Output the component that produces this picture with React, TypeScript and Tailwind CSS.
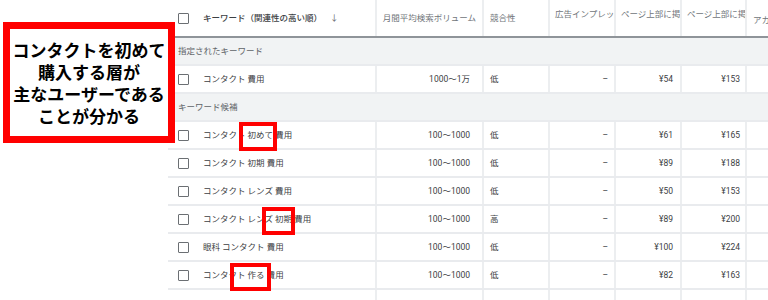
type Row = {
  keyword: string;
  volume: string;
  competition: string;
  impression: string;
  low: string;
  high: string;
};

const cols = 'grid grid-cols-[209px_107px_66px_66px_66px_65px_1fr]';

const specified: Row[] = [
  { keyword: 'コンタクト 費用', volume: '1000～1万', competition: '低', impression: '–', low: '¥54', high: '¥153' },
];

const candidates: Row[] = [
  { keyword: 'コンタクト 初めて 費用', volume: '100～1000', competition: '低', impression: '–', low: '¥61', high: '¥165' },
  { keyword: 'コンタクト 初期 費用', volume: '100～1000', competition: '低', impression: '–', low: '¥89', high: '¥188' },
  { keyword: 'コンタクト レンズ 費用', volume: '100～1000', competition: '低', impression: '–', low: '¥50', high: '¥153' },
  { keyword: 'コンタクト レンズ 初期 費用', volume: '100～1000', competition: '高', impression: '–', low: '¥89', high: '¥200' },
  { keyword: '眼科 コンタクト 費用', volume: '100～1000', competition: '低', impression: '–', low: '¥100', high: '¥224' },
  { keyword: 'コンタクト 作る 費用', volume: '100～1000', competition: '低', impression: '–', low: '¥82', high: '¥163' },
];

const Checkbox = () => (
  <span className="inline-block h-[11px] w-[11px] shrink-0 rounded-[1px] border-[1.5px] border-[#6b6f73]" />
);

const Section = ({ label }: { label: string }) => (
  <div className="flex h-[28px] items-center border-b-2 border-[#e9ebee] bg-[#f1f3f4] pl-[10px] text-[8.5px] text-[#5f6368]">
    {label}
  </div>
);

const DataRow = ({ row }: { row: Row }) => (
  <div className={`${cols} h-[28px] border-b-2 border-[#e9ebee] text-[8.5px] text-[#3c4043]`}>
    <div className="flex items-center gap-[14px] border-r-2 border-[#eceef0] pl-[10px] whitespace-nowrap">
      <Checkbox />
      <span>{row.keyword}</span>
    </div>
    <div className="flex items-center justify-end border-r-2 border-[#eceef0] pr-[12px]">{row.volume}</div>
    <div className="flex items-center border-r-2 border-[#eceef0] pl-[6px]">{row.competition}</div>
    <div className="flex items-center justify-end border-r-2 border-[#eceef0] pr-[6px]">{row.impression}</div>
    <div className="flex items-center justify-end border-r-2 border-[#eceef0] pr-[7px]">{row.low}</div>
    <div className="flex items-center justify-end border-r-2 border-[#eceef0] pr-[5px]">{row.high}</div>
    <div />
  </div>
);

export default function App() {
  return (
    <div className="relative h-[300px] w-[768px] overflow-hidden bg-white font-['Roboto','Noto_Sans_CJK_JP',sans-serif]">
      <div className="flex">
        <div className="w-[168px] shrink-0" />

        <div className="flex-1">
          {/* Header */}
          <div className={`${cols} h-[38px] border-b-2 border-[#8f9499] text-[8.5px] text-[#70757a]`}>
            <div className="flex items-center gap-[14px] border-r-2 border-[#eceef0] pl-[10px] whitespace-nowrap">
              <Checkbox />
              <span className="font-medium text-[#3c4043]">キーワード（関連性の高い順）</span>
              <span className="-ml-[6px] text-[#5f6368]">↓</span>
            </div>
            <div className="flex items-center justify-end border-r-2 border-[#eceef0] pr-[6px] whitespace-nowrap">
              月間平均検索ボリューム
            </div>
            <div className="flex items-center border-r-2 border-[#eceef0] pl-[6px]">競合性</div>
            <div className="overflow-hidden border-r-2 border-[#eceef0] pt-[8px] pl-[5px] whitespace-nowrap">
              広告インプレッ
            </div>
            <div className="overflow-hidden border-r-2 border-[#eceef0] pt-[8px] pl-[5px] whitespace-nowrap">
              ページ上部に掲
            </div>
            <div className="overflow-hidden border-r-2 border-[#eceef0] pt-[8px] pl-[5px] whitespace-nowrap">
              ページ上部に掲
            </div>
            <div className="overflow-hidden pt-[14px] pl-[6px] whitespace-nowrap">アカ</div>
          </div>

          <Section label="指定されたキーワード" />
          {specified.map((row) => (
            <DataRow key={row.keyword} row={row} />
          ))}

          <Section label="キーワード候補" />
          {candidates.map((row) => (
            <DataRow key={row.keyword} row={row} />
          ))}

          {/* next row, cut off by the window */}
          <div className={`${cols} h-[28px]`}>
            <div className="border-r-2 border-[#eceef0]" />
            <div className="border-r-2 border-[#eceef0]" />
            <div className="border-r-2 border-[#eceef0]" />
            <div className="border-r-2 border-[#eceef0]" />
            <div className="border-r-2 border-[#eceef0]" />
            <div className="border-r-2 border-[#eceef0]" />
            <div />
          </div>
        </div>
      </div>

      {/* Annotation box */}
      <div className="absolute top-[22px] left-[3px] flex h-[121px] w-[172px] items-center justify-center border-[7px] border-[#ff0000] bg-white">
        <p className="text-center text-[17px] leading-[22px] font-bold text-black font-['Noto_Sans_CJK_JP',sans-serif]">
          コンタクトを初めて
          <br />
          購入する層が
          <br />
          主なユーザーである
          <br />
          ことが分かる
        </p>
      </div>

      {/* Word highlights */}
      <div className="absolute top-[122px] left-[239px] h-[29px] w-[38px] border-4 border-[#ff0000]" />
      <div className="absolute top-[207px] left-[262px] h-[28px] w-[33px] border-4 border-[#ff0000]" />
      <div className="absolute top-[263px] left-[230px] h-[28px] w-[41px] border-4 border-[#ff0000]" />
    </div>
  );
}
